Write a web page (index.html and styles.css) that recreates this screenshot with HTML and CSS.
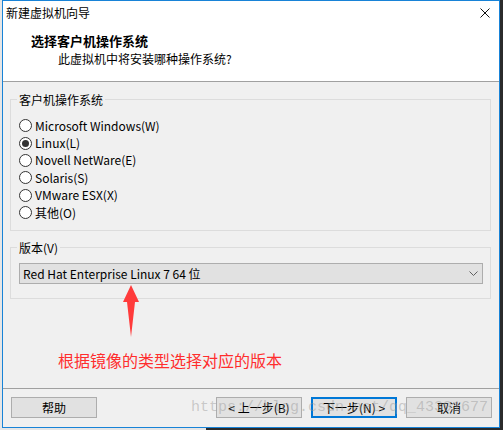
FILE: index.html
```html
<!DOCTYPE html>
<html lang="zh-CN">
<head>
    <meta charset="UTF-8">
    <meta name="viewport" content="width=device-width, initial-scale=1.0">
    <title>新建虚拟机向导</title>
    <link rel="stylesheet" href="styles.css">
</head>
<body>
    <div class="window">
        <div class="titlebar">
            <span class="title">新建虚拟机向导</span>
            <svg class="close" width="10" height="10" viewBox="0 0 10 10">
                <path d="M0.5 0.5 L9.5 9.5 M9.5 0.5 L0.5 9.5" stroke="#111" stroke-width="1" fill="none"/>
            </svg>
        </div>

        <div class="header">
            <div class="heading">选择客户机操作系统</div>
            <div class="subheading">此虚拟机中将安装哪种操作系统?</div>
        </div>

        <div class="content">
            <fieldset class="group os-group">
                <legend>客户机操作系统</legend>
                <label class="radio"><span class="dot"></span>Microsoft Windows(W)</label>
                <label class="radio checked"><span class="dot"></span>Linux(L)</label>
                <label class="radio"><span class="dot"></span>Novell NetWare(E)</label>
                <label class="radio"><span class="dot"></span>Solaris(S)</label>
                <label class="radio"><span class="dot"></span>VMware ESX(X)</label>
                <label class="radio"><span class="dot"></span>其他(O)</label>
            </fieldset>

            <fieldset class="group version-group">
                <legend>版本(V)</legend>
                <div class="select">
                    <span>Red Hat Enterprise Linux 7 64 位</span>
                    <svg width="9" height="5" viewBox="0 0 9 5">
                        <path d="M0.5 0.5 L4.5 4.5 L8.5 0.5" stroke="#606060" stroke-width="1" fill="none"/>
                    </svg>
                </div>
            </fieldset>

            <p class="note">根据镜像的类型选择对应的版本</p>
        </div>

        <div class="footer">
            <button type="button">帮助</button>
            <button type="button" class="push-right">&lt; 上一步(B)</button>
            <button type="button" class="default">下一步(N) &gt;</button>
            <button type="button">取消</button>
        </div>

        <!-- annotation drawn on top of the dialog -->
        <svg class="arrow" width="22" height="56" viewBox="0 0 22 56">
            <polygon points="11,2 19,19 15,19 11,54 7,19 3,19" fill="#ff3b3b"/>
        </svg>
        <div class="watermark">https://blog.csdn.net/qq_43391677</div>
    </div>
</body>
</html>
```

FILE: styles.css
```css
body {
    margin: 0;
    height: 430px;
    overflow: hidden;
    background: linear-gradient(to right, #e6e6e6 206px, #2b2b2b 206px);
    font-family: "Noto Sans CJK SC", "Microsoft YaHei", sans-serif;
    font-size: 12px;
    color: #000;
}

.window {
    position: relative;
    box-sizing: border-box;
    width: 498px;
    height: 428px;
    margin-left: 2px;
    border: 1px solid #1883d7;
    background: #f0f0f0;
    display: flex;
    flex-direction: column;
}

.titlebar {
    height: 24px;
    padding: 0 9px 0 3px;
    background: #fff;
    display: flex;
    align-items: center;
    justify-content: space-between;
    line-height: 16px;
}

.header {
    height: 56px;
    background: #fff;
    border-bottom: 1px solid #a0a0a0;
}

.heading {
    padding: 8px 0 0 28px;
    font-size: 13px;
    font-weight: bold;
    line-height: 16px;
}

.subheading {
    margin-top: 2px;
    padding-left: 55px;
    line-height: 16px;
}

.content {
    flex: 1;
    padding: 0 8px 0 7px;
    display: flex;
    flex-direction: column;
}

.group {
    margin: 0;
    min-width: 0;
    border: 1px solid #dcdcdc;
}

.group legend {
    margin-left: -2px;
    padding: 1px 2px 0;
    line-height: 13px;
}

.os-group {
    margin-top: 10px;
    padding: 11px 7px 9px 8px;
}

.version-group {
    margin-top: 9px;
    padding: 9px 7px 14px 8px;
}

.radio {
    display: flex;
    align-items: center;
    height: 17.4px;
    line-height: 16px;
}

.dot {
    box-sizing: border-box;
    width: 13px;
    height: 13px;
    margin-right: 3px;
    border: 1px solid #333;
    border-radius: 50%;
    background: #fff;
    display: flex;
    align-items: center;
    justify-content: center;
}

.checked .dot::after {
    content: "";
    width: 7px;
    height: 7px;
    border-radius: 50%;
    background: #333;
}

.select {
    box-sizing: border-box;
    height: 21px;
    padding: 0 4px 0 3px;
    border: 1px solid #adadad;
    background: #e1e1e1;
    display: flex;
    align-items: center;
    justify-content: space-between;
    line-height: 16px;
}

.note {
    margin: 51px 0 0 48px;
    font-size: 16px;
    line-height: 20px;
    color: #ff2d2d;
}

.footer {
    box-sizing: border-box;
    height: 39px;
    padding: 8px 7px 0 8px;
    border-top: 1px solid #a0a0a0;
    display: flex;
    gap: 9px;
}

button {
    box-sizing: border-box;
    width: 86px;
    height: 21px;
    padding: 0;
    border: 1px solid #adadad;
    background: #e1e1e1;
    font-family: inherit;
    font-size: 12px;
    color: #000;
}

button.default {
    border: 2px solid #0078d7;
}

.push-right {
    margin-left: auto;
}

.arrow {
    position: absolute;
    left: 117px;
    top: 282px;
}

.watermark {
    position: absolute;
    left: 188px;
    top: 397px;
    font-family: "Liberation Mono", monospace;
    font-size: 15px;
    line-height: 20px;
    color: rgba(150, 150, 150, 0.45);
    pointer-events: none;
    white-space: nowrap;
}
```
